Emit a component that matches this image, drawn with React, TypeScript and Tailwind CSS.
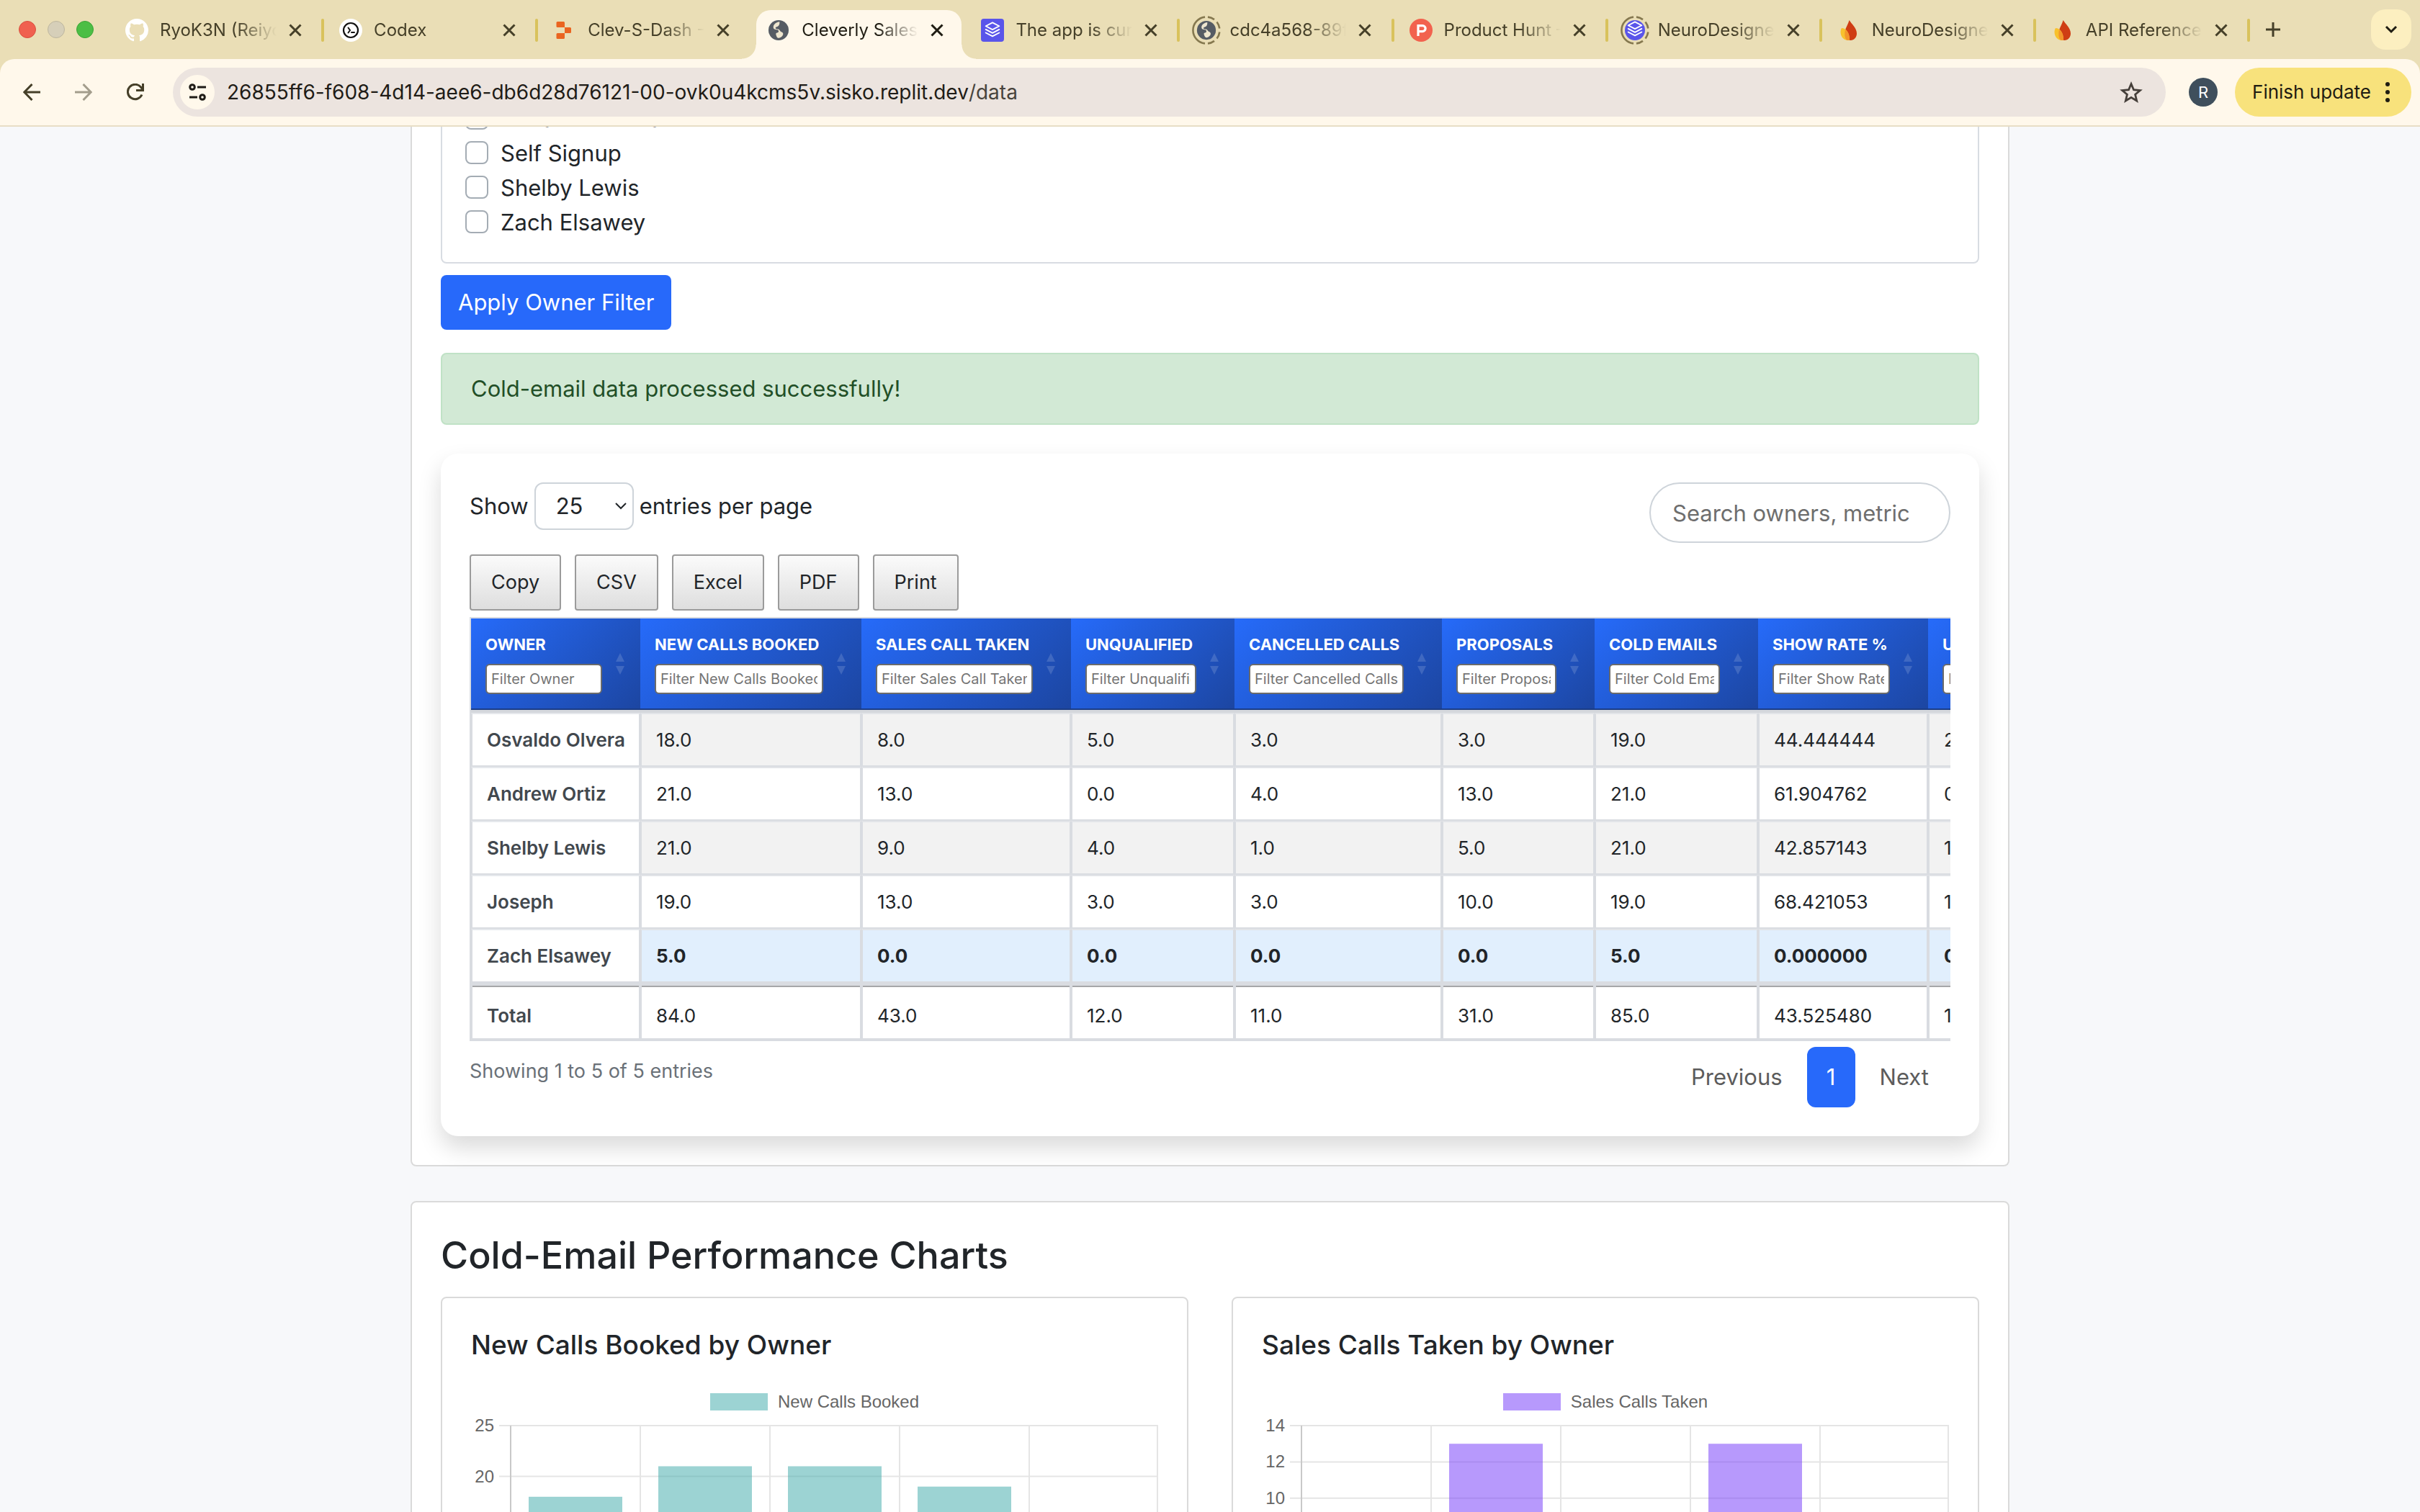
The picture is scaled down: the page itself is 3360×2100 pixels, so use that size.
import React from "react";

type Tab = { title: string; icon: React.ReactNode; active?: boolean; divider?: boolean };

const Globe = () => (
  <g>
    <circle cx="12" cy="12" r="10.5" fill="#565c64" />
    <path d="M13 3.2c-3.6.4-6 2.6-6.4 4.8-.3 2 .6 3 2.2 3.2 2 .2 3.2.4 3.2 1.8 0 1-.4 1.6-1.5 1.7-1.2.1-1.500 1-1.100 2.100.5 1.500 1.100 3.600 3 3.300 2.500-.4 4-2.200 4.300-3.700.3-1.600-.6-2.400-1.900-2.800-1.400-.4-1.300-2.100-2.700-2.600-1.600-.5-3.400-.2-3.300-1.500.1-1 1.300-1 2.300-1.500 1.500-.7 2.100-2.300 1.900-4.800z" fill="#eee6cf" />
  </g>
);

const Layers = () => (
  <g fill="none" stroke="#fff" strokeWidth="1.4" strokeLinejoin="round" strokeLinecap="round">
    <path d="M12 4l7 3.700-7 3.700-7-3.700z" />
    <path d="M5 11.200l7 3.700 7-3.700" />
    <path d="M5 14.600l7 3.700 7-3.700" />
  </g>
);

const GlobeIcon = () => (
  <svg viewBox="0 0 24 24" className="size-8" aria-hidden="true">
    <Globe />
  </svg>
);

const LayersIcon = () => (
  <svg viewBox="0 0 24 24" className="size-8" aria-hidden="true">
    <rect width="24" height="24" rx="3" fill="#5a55ea" />
    <Layers />
  </svg>
);

const DashedRing = () => (
  <g fill="none" stroke="#85784f" strokeWidth="2.600">
    <path d="M18 1.600A18.500 18.500 0 0 0 18 38.400" />
    <path d="M22 1.600a18.500 18.500 0 0 1 9 3.500M34.500 8.500a18.500 18.500 0 0 1 3.800 9M38.300 22.500a18.500 18.500 0 0 1-3.800 9M31 34.900a18.500 18.500 0 0 1-9 3.500" />
  </g>
);

const RingGlobeIcon = () => (
  <svg viewBox="0 0 40 40" className="-mx-1 size-10" aria-hidden="true">
    <DashedRing />
    <svg x="5" y="5" width="30" height="30" viewBox="0 0 24 24">
      <Globe />
    </svg>
  </svg>
);

const RingLayersIcon = () => (
  <svg viewBox="0 0 40 40" className="-mx-1 size-10" aria-hidden="true">
    <DashedRing />
    <circle cx="20" cy="20" r="14" fill="#5a55ea" />
    <svg x="4" y="3" width="32" height="32" viewBox="0 0 24 24">
      <Layers />
    </svg>
  </svg>
);

const GithubIcon = () => (
  <svg viewBox="0 0 16 16" className="size-8" fill="#fff" aria-hidden="true">
    <path d="M8 0C3.580 0 0 3.580 0 8c0 3.540 2.290 6.530 5.470 7.590.4.070.55-.17.55-.38 0-.19-.010-.82-.010-1.490-2.010.37-2.530-.49-2.690-.94-.090-.23-.48-.94-.82-1.130-.28-.15-.68-.52-.010-.53.63-.010 1.080.58 1.230.82.72 1.210 1.870.87 2.330.66.070-.52.28-.87.51-1.070-1.780-.2-3.640-.89-3.640-3.950 0-.87.31-1.590.82-2.150-.080-.2-.36-1.020.080-2.120 0 0 .67-.21 2.200.82.64-.18 1.320-.27 2-.27s1.360.090 2 .27c1.530-1.040 2.200-.82 2.200-.82.44 1.100.16 1.920.080 2.120.51.56.82 1.270.82 2.150 0 3.070-1.870 3.750-3.650 3.950.29.25.54.73.54 1.480 0 1.070-.010 1.930-.010 2.200 0 .21.15.46.55.38A8.010 8.010 0 0 0 16 8c0-4.420-3.580-8-8-8z" />
  </svg>
);

const CodexIcon = () => (
  <svg viewBox="0 0 32 32" className="size-8" aria-hidden="true">
    <circle cx="16" cy="16" r="16" fill="#fff" />
    <circle cx="16" cy="16" r="10" fill="none" stroke="#111" strokeWidth="2.200" />
    <path d="M12.500 12.500l2.500 3.500-2.500 3.500M17 19h4" fill="none" stroke="#111" strokeWidth="2" strokeLinecap="round" />
  </svg>
);

const ReplitIcon = () => (
  <svg viewBox="0 0 32 32" className="size-8" fill="#ea6420" aria-hidden="true">
    <path d="M6 4h8.500a1.500 1.500 0 0 1 1.500 1.500V12H6a1.500 1.500 0 0 1-1.500-1.500v-5A1.500 1.500 0 0 1 6 4z" />
    <path d="M16 12h7.500a1.500 1.500 0 0 1 1.500 1.500v5a1.500 1.500 0 0 1-1.500 1.500H16z" />
    <path d="M6 20h10v6.500a1.500 1.500 0 0 1-1.500 1.500H6a1.500 1.500 0 0 1-1.500-1.500v-5A1.500 1.500 0 0 1 6 20z" />
  </svg>
);

const ProductHuntIcon = () => (
  <svg viewBox="0 0 40 40" className="size-8" aria-hidden="true">
    <path d="M40 20a20 20 0 1 1-40 0 20 20 0 0 1 40 0" fill="#f2624e" />
    <path d="M22.667 20H17v-6h5.667a3 3 0 0 1 0 6m0-10H13v20h4v-6h5.667a7 7 0 0 0 0-14" fill="#fff" />
  </svg>
);

const FlameIcon = () => (
  <svg viewBox="0 0 32 32" className="size-8" aria-hidden="true">
    <path d="M16.500 2C20 7.500 27 13 27 20.500 27 26 23 30 18.500 30c-4.500 0-8-3.500-8-9.500C10.500 13 15 8.500 16.500 2z" fill="#cf3d14" />
    <path d="M6 13c5.500 0 11 5 11 16.500-1 .6-3 .5-4 .3C8 29 4.500 24 4.500 18.500c0-2 .5-4 1.500-5.500z" fill="#f8c12d" />
    <path d="M11 15.500c4 2.500 6.200 7.500 6 14-1 .5-2.500.5-4 .3-2-2-2.900-5.500-2.700-9 .1-2 .2-3.700.7-5.300z" fill="#f2952b" />
  </svg>
);

const tabs: Tab[] = [
  { title: "RyoK3N (Reiyo)", icon: <GithubIcon />, divider: true },
  { title: "Codex", icon: <CodexIcon />, divider: true },
  { title: "Clev-S-Dash - Replit", icon: <ReplitIcon /> },
  { title: "Cleverly Sales Dashboard", icon: <GlobeIcon />, active: true },
  { title: "The app is currently", icon: <LayersIcon />, divider: true },
  { title: "cdc4a568-89f4", icon: <RingGlobeIcon />, divider: true },
  { title: "Product Hunt – The", icon: <ProductHuntIcon />, divider: true },
  { title: "NeuroDesigner", icon: <RingLayersIcon />, divider: true },
  { title: "NeuroDesigner", icon: <FlameIcon />, divider: true },
  { title: "API Reference", icon: <FlameIcon />, divider: true },
];

function BrowserTab({ tab }: { tab: Tab }) {
  return (
    <div className="relative flex min-w-0 flex-1 items-stretch pt-3.5">
      <div
        className={
          tab.active
            ? "relative mr-1 ml-2 flex min-w-0 flex-1 items-center rounded-t-[20px] bg-[#fff8eb] pb-3 pl-[15px] text-[#1f1c12]"
            : "relative mr-1 ml-2 flex min-w-0 flex-1 items-center pb-3 pl-[15px] text-[#453f28]"
        }
      >
        {tab.active && (
          <>
            <span className="absolute bottom-0 -left-5 size-5 bg-[radial-gradient(circle_at_0_0,transparent_19px,#fff8eb_20px)]" />
            <span className="absolute -right-5 bottom-0 size-5 bg-[radial-gradient(circle_at_100%_0,transparent_19px,#fff8eb_20px)]" />
          </>
        )}
        <span className="flex shrink-0">{tab.icon}</span>
        <span className="ml-4 w-[162px] overflow-hidden text-2xl whitespace-nowrap [mask-image:linear-gradient(to_right,#000_65%,transparent)]">
          {tab.title}
        </span>
        <button type="button" aria-label={"Close " + tab.title} className="ml-2.5 flex size-8 shrink-0 items-center justify-center">
          <svg viewBox="0 0 18 18" className="size-[18px]" stroke="currentColor" strokeWidth="3" aria-hidden="true">
            <path d="M1.500 1.500l15 15M16.500 1.500l-15 15" />
          </svg>
        </button>
      </div>
      {tab.divider && <span className="absolute top-[26px] -right-0.5 h-8 w-1 rounded-full bg-[#d9c25c]" />}
    </div>
  );
}

function BrowserChrome() {
  return (
    <header className="shrink-0 bg-[#eadeb6]">
      <div className="flex h-[82px]">
        <div className="flex w-[151px] shrink-0 items-center gap-4 pl-[26px]">
          <span className="size-6 rounded-full border border-[#d9503f] bg-[#f0604f]" />
          <span className="size-6 rounded-full border border-[#bdb69e] bg-[#d6cfb9]" />
          <span className="size-6 rounded-full border border-[#3ba436] bg-[#4cbe45]" />
        </div>
        <div className="flex min-w-0 flex-1">
          {tabs.map((tab, i) => (
            <BrowserTab key={i} tab={tab} />
          ))}
        </div>
        <div className="flex w-[238px] shrink-0 items-center justify-between pr-3 pl-5">
          <button type="button" aria-label="New tab" className="flex size-7 items-center justify-center text-[#453f28]">
            <svg viewBox="0 0 22 22" className="size-[22px]" stroke="currentColor" strokeWidth="3" aria-hidden="true">
              <path d="M11 1v20M1 11h20" />
            </svg>
          </button>
          <button type="button" aria-label="Search tabs" className="flex size-14 items-center justify-center rounded-[20px] bg-[#fcefc0]">
            <svg viewBox="0 0 18 12" className="h-3 w-[18px]" fill="none" stroke="#1f1c12" strokeWidth="3" aria-hidden="true">
              <path d="M2 2l7 7 7-7" />
            </svg>
          </button>
        </div>
      </div>
      <div className="flex h-[94px] items-center rounded-t-[20px] border-b-2 border-[#e8dec6] bg-[#fff8eb] pr-3 pl-7">
        <div className="flex w-[212px] items-center gap-10 text-[#453f28]">
          <button type="button" aria-label="Back" className="flex size-8 items-center justify-center">
            <svg viewBox="0 0 24 24" className="size-6" fill="none" stroke="currentColor" strokeWidth="3" aria-hidden="true">
              <path d="M24 12H2M12.500 1L1.800 12l10.700 11" />
            </svg>
          </button>
          <button type="button" aria-label="Forward" className="flex size-8 items-center justify-center text-[#a39d8c]">
            <svg viewBox="0 0 24 24" className="size-6" fill="none" stroke="currentColor" strokeWidth="3" aria-hidden="true">
              <path d="M0 12h22M11.500 1l10.700 11-10.700 11" />
            </svg>
          </button>
          <button type="button" aria-label="Reload" className="flex size-8 items-center justify-center">
            <svg viewBox="0 0 24 24" className="size-6" fill="none" stroke="currentColor" strokeWidth="3" aria-hidden="true">
              <path d="M21 15.500A10.200 10.200 0 1 1 19.500 5L22 8.500M22.500 0v9.500H13" />
            </svg>
          </button>
        </div>
        <div className="flex h-[68px] flex-1 items-center rounded-full bg-[#ece4df] pr-8 pl-2.5 text-[#1f1c17]">
          <button type="button" aria-label="View site information" className="flex size-12 items-center justify-center rounded-full bg-[#fff8eb]">
            <svg viewBox="0 0 24 24" className="size-6" fill="none" stroke="currentColor" strokeWidth="3" aria-hidden="true">
              <circle cx="5" cy="5" r="3.300" />
              <path d="M12 5h12M1 19h11" />
              <circle cx="19" cy="19" r="3.300" />
            </svg>
          </button>
          <div className="ml-[17px] flex flex-1 items-center text-[28px] leading-9 whitespace-nowrap">
            <input
              type="text"
              aria-label="Address"
              defaultValue="26855ff6-f608-4d14-aee6-db6d28d76121-00-ovk0u4kcms5v.sisko.replit.dev"
              className="[field-sizing:content]"
            />
            <span className="text-[#48443d]">/data</span>
          </div>
          <button type="button" aria-label="Bookmark this tab">
            <svg viewBox="0 0 32 32" className="size-8" fill="none" stroke="#453f3a" strokeWidth="2.800" aria-hidden="true">
              <path d="M16 4.500l3.500 8.200 8.900.8-6.800 5.800 2.100 8.700L16 23.300 8.300 28l2.100-8.700-6.800-5.800 8.900-.8z" />
            </svg>
          </button>
        </div>
        <button type="button" aria-label="Profile" className="ml-8 flex size-10 items-center justify-center rounded-full bg-[#3f4f5c] text-[22px] text-white">
          R
        </button>
        <button type="button" className="ml-6 flex h-[68px] items-center gap-5 rounded-full bg-[#f8e27c] pr-[30px] pl-6 text-[26px] text-[#1f1c12]">
          <span className="whitespace-nowrap">Finish update</span>
          <svg viewBox="0 0 6 28" className="h-7 w-1.5" fill="currentColor" aria-hidden="true">
            <circle cx="3" cy="3" r="3" />
            <circle cx="3" cy="14" r="3" />
            <circle cx="3" cy="25" r="3" />
          </svg>
        </button>
      </div>
    </header>
  );
}

const owners = ["Osvaldo Olvera", "Self Signup", "Shelby Lewis", "Zach Elsawey"];

function OwnerFilter() {
  return (
    <fieldset className="rounded-b-lg border-2 border-t-0 border-[#d8dce2] px-8 pb-8">
      {owners.map((owner) => (
        <label key={owner} className="flex h-12 items-center gap-[17px]">
          <input type="checkbox" className="size-8 appearance-none rounded-lg border-2 border-[#a4acb4] bg-white" />
          <span className="pt-0.5">{owner}</span>
        </label>
      ))}
    </fieldset>
  );
}

const columns = ["Owner", "New Calls Booked", "Sales Call Taken", "Unqualified", "Cancelled Calls", "Proposals", "Cold Emails", "Show Rate %", "Unqualified %"];

const rows = [
  ["Osvaldo Olvera", "18.0", "8.0", "5.0", "3.0", "3.0", "19.0", "44.444444", "27.777778"],
  ["Andrew Ortiz", "21.0", "13.0", "0.0", "4.0", "13.0", "21.0", "61.904762", "0.000000"],
  ["Shelby Lewis", "21.0", "9.0", "4.0", "1.0", "5.0", "21.0", "42.857143", "19.047619"],
  ["Joseph", "19.0", "13.0", "3.0", "3.0", "10.0", "19.0", "68.421053", "15.789474"],
  ["Zach Elsawey", "5.0", "0.0", "0.0", "0.0", "0.0", "5.0", "0.000000", "0.000000"],
];

const totals = ["Total", "84.0", "43.0", "12.0", "11.0", "31.0", "85.0", "43.525480", "12.522968"];

const rowStyles = ["bg-[#f2f2f2]", "bg-white", "bg-[#f2f2f2]", "bg-white", "bg-[#e1effd] font-bold"];

function OwnersTable() {
  return (
    <div className="overflow-hidden">
      <table className="w-[2315px] table-fixed border-separate border-spacing-0 border-t-2 border-l-2 border-[#d9dce1] text-left text-[26px] leading-9">
        <colgroup>
          <col className="w-[235px]" />
          <col className="w-[307px]" />
          <col className="w-[291px]" />
          <col className="w-[227px]" />
          <col className="w-[288px]" />
          <col className="w-[212px]" />
          <col className="w-[227px]" />
          <col className="w-[236px]" />
          <col className="w-[290px]" />
        </colgroup>
        <thead>
          <tr>
            {columns.map((name) => (
              <th
                key={name}
                scope="col"
                className="h-[131px] border-b-4 border-[#d4d7dc] bg-[linear-gradient(135deg,#266bfa,#1c45a0)] bg-origin-border p-0 pb-0.5 shadow-[inset_0_-2px_0_#1b3c85]"
              >
                <div className="flex items-center pr-[22px] pl-5">
                  <div className="min-w-0 flex-1">
                    <div className="text-[22px] leading-8 font-bold whitespace-nowrap text-white uppercase">{name}</div>
                    <input
                      type="text"
                      aria-label={"Filter " + name}
                      placeholder={"Filter " + name}
                      className="mt-[11px] block h-[42px] w-full rounded-md border-2 border-[#6b6b6b] bg-white px-1.5 text-xl font-normal placeholder:text-[#757575]"
                    />
                  </div>
                  <svg viewBox="0 0 12 30" className="ml-[19px] h-[30px] w-3 shrink-0 fill-white/15" aria-hidden="true">
                    <path d="M6 0l6 12H0zM6 30l6-12H0z" />
                  </svg>
                </div>
              </th>
            ))}
          </tr>
        </thead>
        <tbody>
          {rows.map((row, r) => (
            <tr key={row[0]} className={rowStyles[r]}>
              {row.map((value, c) =>
                c === 0 ? (
                  <th key={c} scope="row" className="h-[75px] border-2 border-t-[#e6e8ec] border-r-[#d9dce1] border-b-[#d9dce1] border-l-[#d9dce1] bg-white py-0 pl-5 font-semibold text-[#42484e]">
                    {value}
                  </th>
                ) : (
                  <td key={c} className="h-[75px] border-2 border-t-[#e2e4e8] border-r-[#d9dce1] border-b-[#d9dce1] border-l-[#d9dce1] py-0 pl-5">
                    {value}
                  </td>
                ),
              )}
            </tr>
          ))}
        </tbody>
        <tfoot>
          <tr>
            {totals.map((value, c) =>
              c === 0 ? (
                <th key={c} scope="row" className="h-[81px] border-x-2 border-y-4 border-[#d9dce1] pt-2.5 pb-0 pl-5 font-semibold text-[#42484e] shadow-[inset_0_2px_0_#a6a7a9]">
                  {value}
                </th>
              ) : (
                <td key={c} className="h-[81px] border-x-2 border-y-4 border-[#d9dce1] pt-2.5 pb-0 pl-5 shadow-[inset_0_2px_0_#a6a7a9]">
                  {value}
                </td>
              ),
            )}
          </tr>
        </tfoot>
      </table>
    </div>
  );
}

function TableCard() {
  return (
    <section className="mt-10 rounded-3xl bg-white p-10 shadow-[0_16px_32px_rgba(0,0,0,0.15)]">
      <div className="flex items-start justify-between">
        <div className="flex items-center gap-2">
          <label htmlFor="page-size">Show</label>
          <div className="relative">
            <select id="page-size" defaultValue="25" className="h-[66px] w-[138px] appearance-none rounded-xl border-2 border-[#ced4da] bg-white pl-7">
              <option>10</option>
              <option>25</option>
              <option>50</option>
            </select>
            <svg viewBox="0 0 16 10" className="pointer-events-none absolute top-7 right-2.5 h-2.5 w-4" fill="none" stroke="#212529" strokeWidth="2" aria-hidden="true">
              <path d="M1 1l7 7 7-7" />
            </svg>
          </div>
          <span>entries per page</span>
        </div>
        <input
          type="text"
          aria-label="Search owners, metrics"
          placeholder="Search owners, metric"
          className="h-[84px] w-[418px] rounded-full border-2 border-[#ced4da] bg-white px-[30px] placeholder:text-[#6e6e6e]"
        />
      </div>
      <div className="mt-4 flex gap-[19px] text-[27px]">
        {["Copy", "CSV", "Excel", "PDF", "Print"].map((name) => (
          <button key={name} type="button" className="h-[78px] rounded border-2 border-[#9b9b9b] bg-linear-to-b from-[#fbfbfb] to-[#dedede] px-7">
            {name}
          </button>
        ))}
      </div>
      <div className="mt-[9px]">
        <OwnersTable />
      </div>
      <div className="mt-2 flex items-start justify-between">
        <p className="mt-4 text-[27px] leading-9 text-[#6a7178]">Showing 1 to 5 of 5 entries</p>
        <nav aria-label="Pagination" className="flex gap-1 text-[#5c5c5c]">
          <button type="button" className="h-[84px] px-[30px]">
            Previous
          </button>
          <button type="button" aria-current="page" className="h-[84px] w-[67px] rounded-xl bg-[#2769fa] text-white">
            1
          </button>
          <button type="button" className="h-[84px] px-[30px]">
            Next
          </button>
        </nav>
      </div>
    </section>
  );
}

type Chart = { title: string; label: string; max: number; step: number; values: number[]; fill: string; swatch: string };

const charts: Chart[] = [
  {
    title: "New Calls Booked by Owner",
    label: "New Calls Booked",
    max: 25,
    step: 5,
    values: [18, 21, 21, 19, 5],
    fill: "rgba(57,167,167,0.5)",
    swatch: "bg-[#9cd3d3]",
  },
  {
    title: "Sales Calls Taken by Owner",
    label: "Sales Calls Taken",
    max: 14,
    step: 2,
    values: [8, 13, 9, 13, 0],
    fill: "rgba(111,51,249,0.5)",
    swatch: "bg-[#b799fc]",
  },
];

function ChartCard({ chart }: { chart: Chart }) {
  const left = 55;
  const top = 15;
  const height = 353;
  const pitch = 180;
  const right = left + pitch * 5;
  const y = (v: number) => top + height - (v / chart.max) * height;
  const ticks = Array.from({ length: chart.max / chart.step + 1 }, (_, i) => i * chart.step);
  return (
    <article className="flex-1 rounded-lg border-2 border-[#dadada] bg-white px-10 pt-10 pb-10">
      <h3 className="text-[37px] leading-[50px] font-medium">{chart.title}</h3>
      <div className="mt-9 flex h-9 items-center justify-center gap-[14px] font-['Liberation_Sans',sans-serif] text-2xl text-[#666]">
        <span className={"h-6 w-20 " + chart.swatch} />
        {chart.label}
      </div>
      <svg viewBox="0 0 954 420" className="w-full" role="img" aria-label={chart.title}>
        {ticks.map((t) => (
          <g key={t}>
            <path d={`M${left - 16} ${y(t)}H${right}`} stroke="#e5e5e5" strokeWidth="2" />
            <text x={left - 23} y={y(t) + 8} textAnchor="end" fontSize="24" fill="#666" fontFamily="Liberation Sans, sans-serif">
              {t}
            </text>
          </g>
        ))}
        {[0, 1, 2, 3, 4, 5].map((i) => (
          <path key={i} d={`M${left + i * pitch - (i === 5 ? 2 : 0)} ${top}V${top + height}`} stroke={i === 0 ? "#c9c9c9" : "#e5e5e5"} strokeWidth="2" />
        ))}
        {chart.values.map((v, i) => (
          <rect key={i} x={left + i * pitch + 25} y={y(v)} width="130" height={top + height - y(v)} fill={chart.fill} />
        ))}
      </svg>
    </article>
  );
}

export default function App() {
  return (
    <div className="flex h-screen flex-col overflow-hidden bg-[#f7f8fa] font-[Inter,'Liberation_Sans',sans-serif] text-[31px] leading-12 text-[#212529]">
      <BrowserChrome />
      <main className="min-h-0 flex-1 overflow-hidden px-[570px]">
        <section className="-mt-9 rounded-b-lg border-2 border-t-0 border-[#dadada] bg-white px-10 pb-10">
          <OwnerFilter />
          <button type="button" className="mt-4 h-[76px] rounded-lg bg-[#2769fa] px-6 text-white">
            Apply Owner Filter
          </button>
          <p role="status" className="mt-8 rounded-lg border-2 border-[#c0e2c6] bg-[#d2e9d5] px-10 py-6 text-[#224f27]">
            Cold-email data processed successfully!
          </p>
          <TableCard />
        </section>
        <section className="mt-12 rounded-lg border-2 border-[#dadada] bg-white px-10 pt-10 pb-10">
          <h2 className="text-[52px] leading-[68px] font-medium">Cold-Email Performance Charts</h2>
          <div className="mt-[23px] flex gap-[60px]">
            {charts.map((chart) => (
              <ChartCard key={chart.title} chart={chart} />
            ))}
          </div>
        </section>
      </main>
    </div>
  );
}
